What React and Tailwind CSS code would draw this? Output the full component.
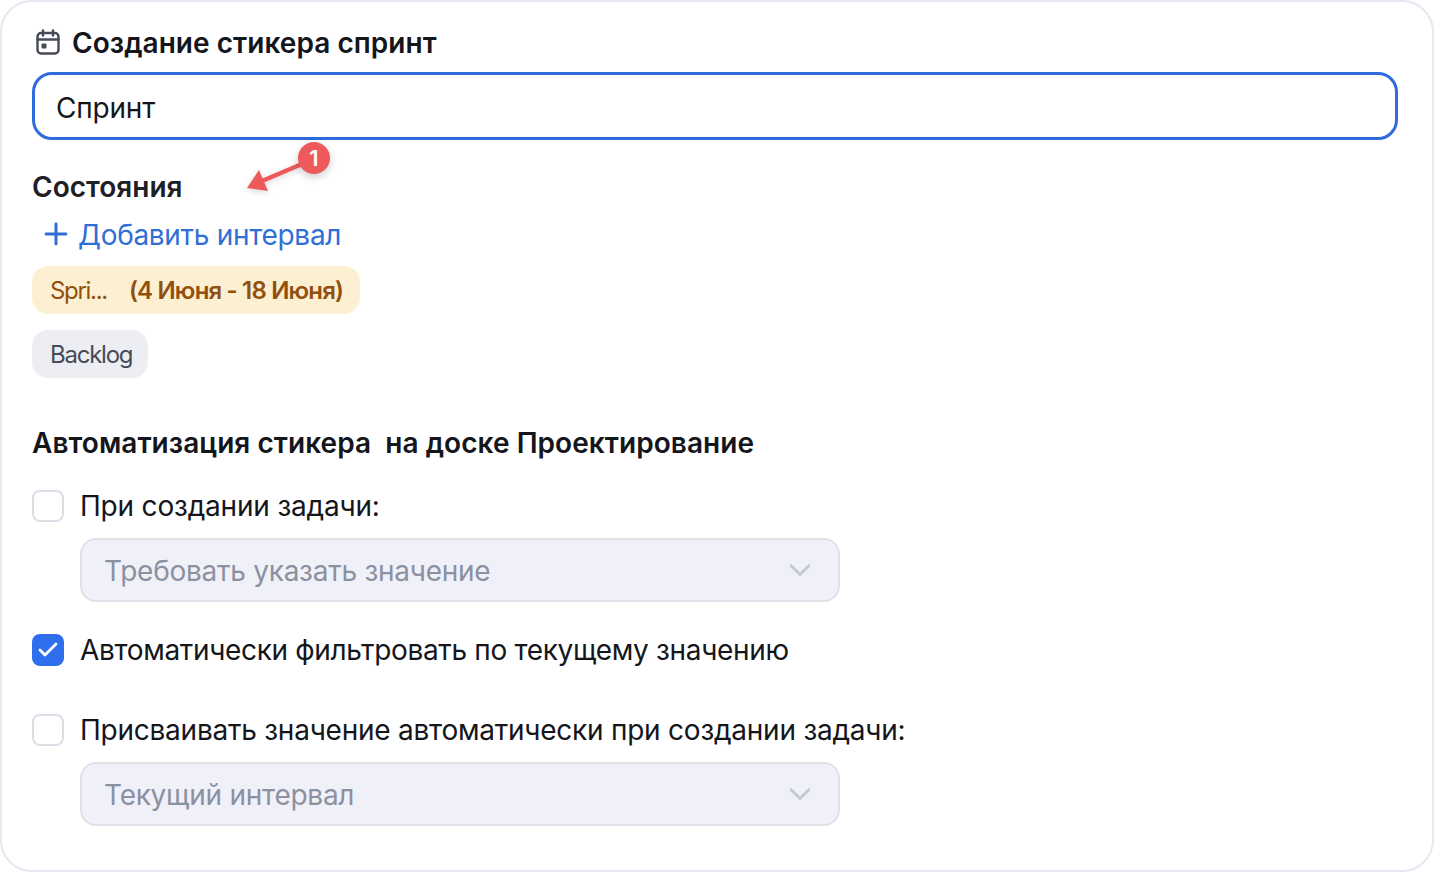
import { ChevronDown, Plus, Check } from 'lucide-react';

function CheckBox({ checked }) {
  if (checked) {
    return (
      <span className="flex h-8 w-8 shrink-0 items-center justify-center rounded-lg bg-[#2f6fed]">
        <Check size={24} strokeWidth={2.8} className="text-white" />
      </span>
    );
  }
  return <span className="h-8 w-8 shrink-0 rounded-lg border-2 border-[#dcdde6] bg-white" />;
}

function Select({ value }) {
  return (
    <div className="ml-12 mt-4 flex h-16 w-[760px] items-center justify-between rounded-2xl border-2 border-[#dfe0e8] bg-[#f0f0f9] pl-[22px] pr-[20px]">
      <span className="pt-[1px] text-[28px] tracking-[-0.26px] text-[#8b91a0]">{value}</span>
      <ChevronDown size={36} strokeWidth={1.9} className="text-[#c6c8d2]" />
    </div>
  );
}

export default function App() {
  return (
    <div className="relative h-[872px] w-[1434px] overflow-hidden bg-white font-['Inter',sans-serif] text-[#14161c]">
      <div className="h-full w-full rounded-[32px] border-2 border-[#e6e7f0] bg-white pl-[30px] pr-[34px] pt-[26px]">
        {/* Title */}
        <div className="flex h-7 items-center gap-[10px] pl-[2px]">
          <svg width="28" height="28" viewBox="0 0 28 28" fill="none" className="shrink-0 text-[#474b58]">
            <rect x="3.5" y="5" width="21" height="20.5" rx="3.5" stroke="currentColor" strokeWidth="2.4" />
            <path d="M3.5 11.5h21M9 2.5v5M19 2.5v5" stroke="currentColor" strokeWidth="2.4" strokeLinecap="round" />
            <rect x="7.5" y="15.5" width="5" height="5" rx="1" fill="currentColor" />
          </svg>
          <h1 className="translate-y-[1px] text-[28px] font-semibold leading-7 tracking-[0.05px]">Создание стикера спринт</h1>
        </div>

        <input
          readOnly
          value="Спринт"
          className="mt-[16px] block h-[68px] w-full rounded-[20px] border-[3px] border-[#2f6bdc] bg-white pl-[21px] pt-[3px] text-[28px] tracking-[-0.2px] text-[#14161c] outline-none"
        />

        <h2 className="mt-[32px] translate-y-[1px] text-[28px] font-semibold leading-7 text-[#1e2026]">Состояния</h2>

        <button className="mt-[20px] flex h-7 items-center gap-[5px] pl-[7px] text-[28px] tracking-[-0.3px] text-[#2f6fd6]">
          <Plus size={34} strokeWidth={2.1} />
          <span className="translate-y-[1px]">Добавить интервал</span>
        </button>

        <div className="mt-[18px] flex h-12 w-[328px] items-center gap-[22px] whitespace-nowrap rounded-2xl bg-[#fdf0d2] px-[18px] pt-[2px] text-[24px] tracking-[-1.3px] text-[#92500f]">
          <span>Spri...</span>
          <span className="font-semibold tracking-[-0.83px]">(4 Июня - 18 Июня)</span>
        </div>
        <div className="mt-4 flex h-12 w-[116px] items-center rounded-2xl bg-[#eceef3] px-[18px] pt-[2px] text-[24px] tracking-[-1.25px] text-[#474b58]">
          Backlog
        </div>

        <h2 className="mt-[50px] translate-y-[1px] whitespace-pre text-[28px] font-semibold leading-7 tracking-[0.05px]">
          Автоматизация стикера  на доске Проектирование
        </h2>

        <label className="mt-[34px] flex items-center gap-4 text-[28px] leading-8 tracking-[-0.19px]">
          <CheckBox />
          При создании задачи:
        </label>
        <Select value="Требовать указать значение" />

        <label className="mt-8 flex items-center gap-4 text-[28px] leading-8 tracking-[-0.33px]">
          <CheckBox checked />
          Автоматически фильтровать по текущему значению
        </label>

        <label className="mt-12 flex items-center gap-4 text-[28px] leading-8 tracking-[-0.24px]">
          <CheckBox />
          Присваивать значение автоматически при создании задачи:
        </label>
        <Select value="Текущий интервал" />
      </div>

      {/* Annotation */}
      <svg width="110" height="70" viewBox="0 0 110 70" fill="none" className="absolute left-[240px] top-[130px] drop-shadow-[0_2px_3px_rgba(0,0,0,0.15)]">
        <path d="M62 34 L22 51" stroke="#ee5a5c" strokeWidth="4.5" />
        <path d="M7 58 L19 40 L28 61 Z" fill="#ee5a5c" />
      </svg>
      <div className="absolute left-[298px] top-[142px] flex h-8 w-8 items-center justify-center rounded-full bg-[#ee5a5c] text-[22px] font-semibold text-white shadow-[0_3px_8px_rgba(0,0,0,0.2)]">
        1
      </div>
    </div>
  );
}
